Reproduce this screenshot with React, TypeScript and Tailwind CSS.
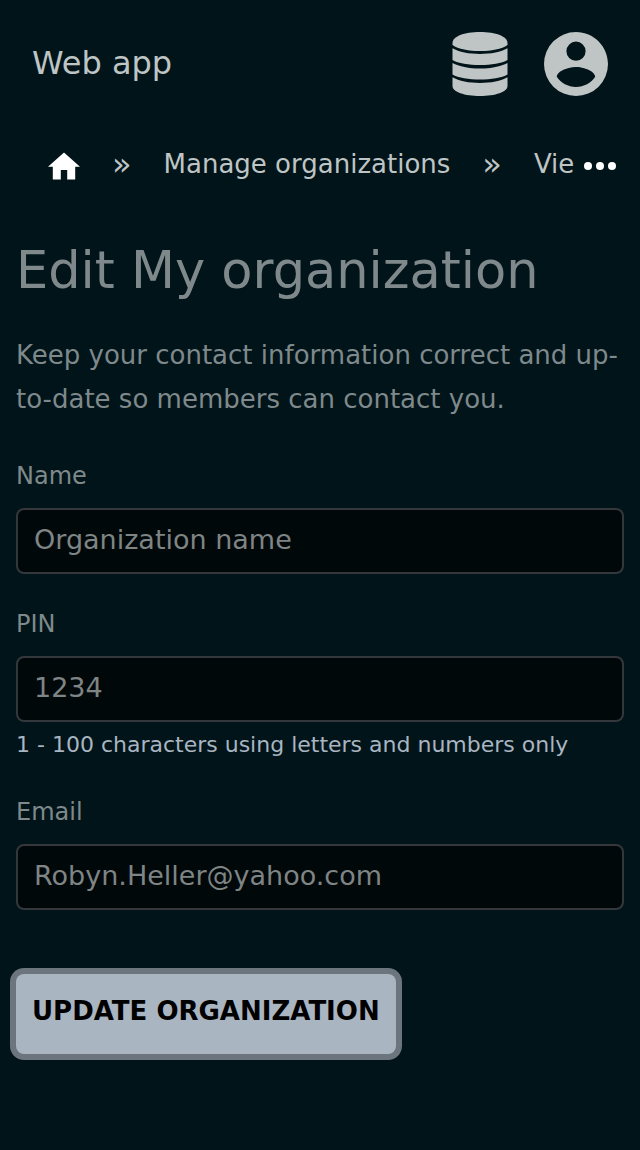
import React from "react";

function DatabaseIcon() {
  return (
    <svg viewBox="0 0 56 64" className="h-16 w-14" fill="currentColor" aria-hidden="true">
      <path d="M.5 11C.5 4.500 12 0 28 0s27.500 4.500 27.500 11v2C50 17 39 19 28 19S6 17 .5 13Z" />
      <path d="M.5 16.300C7 20 17 22 28 22s21-2 27.500-5.700V28C50 31.500 39 33 28 33S6 31.500 .5 28Z" />
      <path d="M.5 31C7 34.500 17 36.500 28 36.500s21-2 27.500-5.500V42.500C50 46 39 47.500 28 47.500S6 46 .5 42.500Z" />
      <path d="M.5 45.300C7 49 17 51 28 51s21-2 27.500-5.700V54c0 6-12 10-27.500 10S.5 60 .5 54Z" />
    </svg>
  );
}

function AccountIcon() {
  return (
    <svg viewBox="2 2 20 20" className="size-16" fill="currentColor" aria-hidden="true">
      <path d="M12 19.200c-2.500 0-4.710-1.280-6-3.200.030-2 4-3.100 6-3.100s5.970 1.100 6 3.100c-1.290 1.920-3.500 3.200-6 3.200M12 5a3 3 0 0 1 3 3 3 3 0 0 1-3 3 3 3 0 0 1-3-3 3 3 0 0 1 3-3m0-3A10 10 0 0 0 2 12a10 10 0 0 0 10 10 10 10 0 0 0 10-10c0-5.530-4.500-10-10-10z" />
    </svg>
  );
}

function Separator() {
  return (
    <span aria-hidden="true" className="text-[32px] leading-10">
      »
    </span>
  );
}

type FieldProps = { id: string; label: string; value: string; type?: string; hint?: string };

function Field({ id, label, value, type = "text", hint }: FieldProps) {
  return (
    <div className="flex flex-col">
      <label htmlFor={id} className="text-2xl leading-8 text-[#7f898b]">
        {label}
      </label>
      <input
        id={id}
        type={type}
        placeholder={value}
        aria-describedby={hint ? `${id}-hint` : undefined}
        className="mt-4 h-[66px] w-full rounded-lg border-2 border-[#34383c] bg-[#00080a] px-4 pb-1 text-[27px] text-[#7f8484] outline-none placeholder:text-[#7f8484]"
      />
      {hint && (
        <p id={`${id}-hint`} className="mt-1.5 text-[22px] leading-[34px] text-[#a9b5c1]">
          {hint}
        </p>
      )}
    </div>
  );
}

export default function App() {
  return (
    <div className="min-h-screen bg-[#001419] font-['DejaVu_Sans',sans-serif] text-[#7f898b]">
      <header className="flex items-center justify-between p-8 text-[#bfc4c5]">
        <a href="#" className="pb-0.5 text-[32px] leading-10">
          Web app
        </a>
        <div className="flex gap-9">
          <button type="button" aria-label="Data">
            <DatabaseIcon />
          </button>
          <button type="button" aria-label="Account">
            <AccountIcon />
          </button>
        </div>
      </header>
      <nav aria-label="Breadcrumb" className="flex h-[72px] items-center pr-4 pl-12 text-[26px] text-[#bfc4c5]">
        <div className="flex min-w-0 flex-1 items-center gap-8 overflow-hidden whitespace-nowrap">
          <a href="#" aria-label="Home" className="shrink-0 pt-1 text-white">
            <svg viewBox="2 3 20 17" className="h-7 w-8" fill="currentColor" aria-hidden="true">
              <path d="M10 20v-6h4v6h5v-8h3L12 3 2 12h3v8z" />
            </svg>
          </a>
          <Separator />
          <a href="#" className="shrink-0">Manage organizations</a>
          <Separator />
          <a href="#" className="shrink-0">Vie</a>
        </div>
        <button type="button" aria-label="More" className="shrink-0 px-2 pt-1 text-white">
          <svg viewBox="4 10 16 4" className="h-2 w-8" fill="currentColor" aria-hidden="true">
            <circle cx="6" cy="12" r="2" />
            <circle cx="12" cy="12" r="2" />
            <circle cx="18" cy="12" r="2" />
          </svg>
        </button>
      </nav>
      <main className="px-4 pt-[41px] pb-20">
        <h1 className="text-[51px] leading-[60px]">Edit My organization</h1>
        <p className="mt-8 text-[26px] leading-11">
          Keep your contact information correct and up-to-date so members can contact you.
        </p>
        <form className="mt-[39px] flex flex-col gap-[34px]" onSubmit={(e) => e.preventDefault()}>
          <Field id="name" label="Name" value="Organization name" />
          <Field
            id="pin"
            label="PIN"
            value="1234"
            hint="1 - 100 characters using letters and numbers only"
          />
          <Field id="email" label="Email" type="email" value="Robyn.Heller@yahoo.com" />
          <button
            type="submit"
            className="mt-[30px] h-20 self-start rounded-lg bg-[#a9b5c1] px-4 pb-1.5 text-[26px] font-bold text-black ring-6 ring-[#6c757d]"
          >
            UPDATE ORGANIZATION
          </button>
        </form>
      </main>
    </div>
  );
}
